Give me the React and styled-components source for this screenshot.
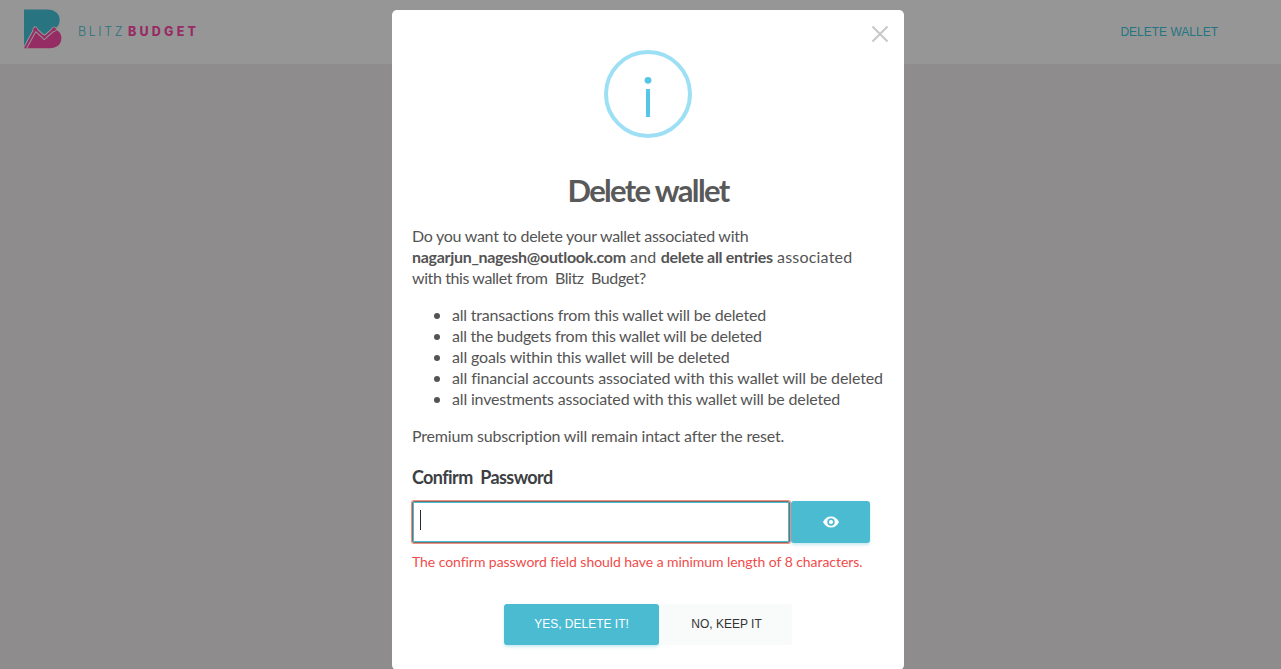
import React from "react";
import styled, { createGlobalStyle } from "styled-components";

const Global = createGlobalStyle`
  * { box-sizing: border-box; }
  html, body, #root { height: 100%; margin: 0; }
  body { overflow: hidden; background: #8e8c8d; font-family: Lato, sans-serif; }
`;

const Page = styled.div`
  height: 100%;
`;

const Header = styled.header`
  height: 64px;
  padding: 0 63px 0 24px;
  display: flex;
  align-items: center;
  justify-content: space-between;
  background: #969696;
`;

const Brand = styled.div`
  display: flex;
  align-items: center;
  height: 64px;
`;

const Mark = styled.svg`
  width: 38px;
  height: 40px;
  margin: 0 16px 6px 0;
`;

const Word = styled.span`
  display: block;
  width: ${(p) => p.$width}px;
  font: ${(p) => p.$weight} 12.5px/16px Inter, sans-serif;
  letter-spacing: ${(p) => p.$spacing}px;
  color: ${(p) => p.$color};
  white-space: nowrap;
`;

const HeaderLink = styled.a`
  font: 12px/16px "Liberation Sans", sans-serif;
  color: #247582;
`;

const Overlay = styled.div`
  position: absolute;
  inset: 0;
  padding: 10px 0 0 392px;
`;

const Modal = styled.section`
  position: relative;
  width: 512px;
  height: 660px;
  padding: 40px 20px 0;
  display: flex;
  flex-direction: column;
  background: #fff;
  border-radius: 5px;
  color: #545454;
`;

const Close = styled.button`
  position: absolute;
  top: 15px;
  right: 15px;
  width: 18px;
  height: 18px;
  padding: 0;
  border: 0;
  background: none;
  svg { display: block; }
`;

const InfoIcon = styled.svg`
  width: 88px;
  height: 88px;
  align-self: center;
`;

const Title = styled.h2`
  margin: 32px 0 15px;
  font-size: 31px;
  line-height: 40px;
  font-weight: 700;
  text-align: center;
  color: #595959;
  letter-spacing: ${(p) => p.$spacing}px;
`;

const Paragraph = styled.p`
  margin: 0 0 16px;
  font-size: 16px;
  line-height: 21px;
`;

const Line = styled.span`
  display: block;
  white-space: pre;
  letter-spacing: ${(p) => p.$spacing}px;
`;

const Strong = styled.b`
  letter-spacing: ${(p) => p.$spacing}px;
`;

const List = styled.ul`
  margin: 0 0 16px;
  padding: 0;
  list-style: none;
  font-size: 16px;
  line-height: 21px;
`;

const Item = styled.li`
  display: flex;
  align-items: center;
  height: 21px;
  padding-left: 22px;
  white-space: nowrap;
  letter-spacing: ${(p) => p.$spacing}px;
  &::before {
    content: "";
    flex: none;
    width: 6px;
    height: 6px;
    margin: 3px 12px 0 0;
    border-radius: 50%;
    background: #545454;
  }
`;

const Label = styled.label`
  margin: 3px 0 12px;
  font-size: 18px;
  line-height: 24px;
  font-weight: 700;
  color: #3c4043;
  white-space: pre;
  letter-spacing: ${(p) => p.$spacing}px;
`;

const Field = styled.div`
  display: flex;
  gap: 1px;
  height: 42px;
`;

const PasswordBox = styled.div`
  width: 378px;
  height: 42px;
  padding: 7px 6px;
  border: 1px solid #77706f;
  border-radius: 2px;
  box-shadow: 0 0 0 1px #f0917f, inset 0 0 0 1px #4bbbd2;
`;

const Caret = styled.div`
  width: 1px;
  height: 20px;
  margin: 1px 0 0 1px;
  background: #222b38;
`;

const RevealButton = styled.button`
  width: 79px;
  height: 42px;
  padding: 0;
  border: 0;
  border-radius: 3px;
  display: flex;
  align-items: center;
  justify-content: center;
  background: #4bbbd2;
  box-shadow: 0 2px 3px rgba(75, 187, 210, 0.3);
`;

const ErrorText = styled.p`
  margin: 8px 0 32px;
  font-size: 14px;
  line-height: 21px;
  color: #f04c4b;
  white-space: nowrap;
  letter-spacing: ${(p) => p.$spacing}px;
`;

const Actions = styled.div`
  display: flex;
  justify-content: center;
`;

const Action = styled.button`
  width: ${(p) => p.$width}px;
  height: 41px;
  padding: 0 0 1px ${(p) => (p.$primary ? 0 : 2)}px;
  border: 0;
  border-radius: 3px;
  font: 12px/16px "Liberation Sans", sans-serif;
  color: ${(p) => (p.$primary ? "#fff" : "#333")};
  background: ${(p) => (p.$primary ? "#4bbbd2" : "#f9fafa")};
  box-shadow: ${(p) => (p.$primary ? "0 2px 3px rgba(75, 187, 210, 0.3)" : "none")};
`;

const items = [
  ["all transactions from this wallet will be deleted", -0.2],
  ["all the budgets from this wallet will be deleted", -0.25],
  ["all goals within this wallet will be deleted", -0.16],
  ["all financial accounts associated with this wallet will be deleted", -0.11],
  ["all investments associated with this wallet will be deleted", -0.17],
];

export default function App() {
  return (
    <Page>
      <Global />
      <Header>
        <Brand>
          <Mark viewBox="24 9 38 40">
            <path d="M24 9.5H47C55 9.5 59.7 14 59.7 20C59.7 24 58 27 54.5 29L44.3 37.5L35.3 29.3L25 47H24Z" fill="#287480" />
            <path d="M26 48.3L35.3 29.3L44.3 37.5L54 29C59 30.5 61.4 34 61.4 38C61.4 44 57 48.3 49.5 48.3Z" fill="#962c64" />
            <path d="M25 48.3L35.3 29.3L44.3 37.5L54 29" fill="none" stroke="#969696" strokeWidth="4" />
            <g fill="#962c64" stroke="#969696" strokeWidth="0.8">
              <circle cx="35.3" cy="29.3" r="2.3" />
              <circle cx="44.3" cy="37" r="2" />
              <circle cx="54" cy="29.3" r="2.3" />
            </g>
            <path d="M25 48.3L35.3 29.3L44.3 37.5L54 29" fill="none" stroke="#962c64" strokeWidth="2" />
          </Mark>
          <Word $width={50} $weight={300} $spacing={2.6} $color="#287480">BLITZ</Word>
          <Word $width={74} $weight={800} $spacing={3.2} $color="#962c64">BUDGET</Word>
        </Brand>
        <HeaderLink>DELETE WALLET</HeaderLink>
      </Header>
      <Overlay>
        <Modal>
          <Close aria-label="Close">
            <svg width="18" height="18" viewBox="0 0 18 18">
              <path d="M1.5 1.5L16.5 16.5M16.5 1.5L1.5 16.5" stroke="#c8c8c8" strokeWidth="2" />
            </svg>
          </Close>
          <InfoIcon viewBox="0 0 88 88">
            <circle cx="44" cy="44" r="42" fill="none" stroke="#9de0f6" strokeWidth="4" />
            <circle cx="44" cy="30.3" r="3.4" fill="#55c6e8" />
            <path d="M44 39V67" stroke="#55c6e8" strokeWidth="4" />
          </InfoIcon>
          <Title $spacing={-1.65}>Delete wallet</Title>
          <Paragraph>
            <Line $spacing={-0.27}>Do you want to delete your wallet associated with</Line>
            <Line $spacing={0.2}><Strong $spacing={-0.3}>nagarjun_nagesh@outlook.com</Strong> and <Strong $spacing={-0.3}>delete all entries</Strong> associated</Line>
            <Line $spacing={-0.4}>with this wallet from  Blitz  Budget?</Line>
          </Paragraph>
          <List>
            {items.map(([text, spacing]) => (
              <Item key={text} $spacing={spacing}>{text}</Item>
            ))}
          </List>
          <Paragraph><Line $spacing={-0.19}>Premium subscription will remain intact after the reset.</Line></Paragraph>
          <Label $spacing={-0.6}>Confirm  Password</Label>
          <Field>
            <PasswordBox><Caret /></PasswordBox>
            <RevealButton aria-label="Show password">
              <svg width="16" height="12" viewBox="0 0 16 12">
                <path d="M0 6C1.5 2.5 4.4 0.5 8 0.5S14.5 2.5 16 6C14.5 9.5 11.6 11.5 8 11.5S1.5 9.5 0 6Z" fill="#fff" />
                <circle cx="8" cy="6" r="2.9" fill="#fff" stroke="#4bbbd2" strokeWidth="1.6" />
              </svg>
            </RevealButton>
          </Field>
          <ErrorText $spacing={-0.06}>The confirm password field should have a minimum length of 8 characters.</ErrorText>
          <Actions>
            <Action $primary $width={155}>YES, DELETE IT!</Action>
            <Action $width={133}>NO, KEEP IT</Action>
          </Actions>
        </Modal>
      </Overlay>
    </Page>
  );
}
